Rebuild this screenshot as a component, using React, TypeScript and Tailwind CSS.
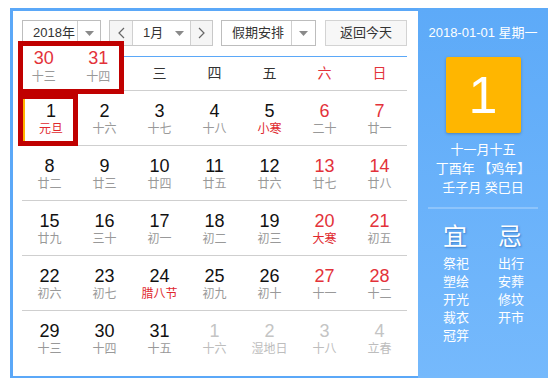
import React from "react";

type Day = { n: number; l: string; red?: boolean; lred?: boolean; other?: boolean; sel?: boolean };

const rows: Day[][] = [
  [
    { n: 1, l: "元旦", lred: true, sel: true },
    { n: 2, l: "十六" },
    { n: 3, l: "十七" },
    { n: 4, l: "十八" },
    { n: 5, l: "小寒", lred: true },
    { n: 6, l: "二十", red: true },
    { n: 7, l: "廿一", red: true },
  ],
  [
    { n: 8, l: "廿二" },
    { n: 9, l: "廿三" },
    { n: 10, l: "廿四" },
    { n: 11, l: "廿五" },
    { n: 12, l: "廿六" },
    { n: 13, l: "廿七", red: true },
    { n: 14, l: "廿八", red: true },
  ],
  [
    { n: 15, l: "廿九" },
    { n: 16, l: "三十" },
    { n: 17, l: "初一" },
    { n: 18, l: "初二" },
    { n: 19, l: "初三" },
    { n: 20, l: "大寒", red: true, lred: true },
    { n: 21, l: "初五", red: true },
  ],
  [
    { n: 22, l: "初六" },
    { n: 23, l: "初七" },
    { n: 24, l: "腊八节", lred: true },
    { n: 25, l: "初九" },
    { n: 26, l: "初十" },
    { n: 27, l: "十一", red: true },
    { n: 28, l: "十二", red: true },
  ],
  [
    { n: 29, l: "十三" },
    { n: 30, l: "十四" },
    { n: 31, l: "十五" },
    { n: 1, l: "十六", other: true },
    { n: 2, l: "湿地日", other: true },
    { n: 3, l: "十八", other: true },
    { n: 4, l: "立春", other: true },
  ],
];

const weekdays = ["一", "二", "三", "四", "五", "六", "日"];

const font = { fontFamily: '"Liberation Sans", Arial, "Noto Sans CJK SC", sans-serif' };

function Tri() {
  return (
    <svg width="9" height="5" viewBox="0 0 9 5">
      <polygon points="0,0 9,0 4.5,5" fill="#8a8a8a" />
    </svg>
  );
}

function Chevron({ dir }: { dir: "l" | "r" }) {
  return (
    <svg width="7" height="12" viewBox="0 0 7 12">
      <polyline
        points={dir === "l" ? "6,1 1,6 6,11" : "1,1 6,6 1,11"}
        fill="none"
        stroke="#666"
        strokeWidth="1.2"
      />
    </svg>
  );
}

export default function App() {
  return (
    <div className="w-[554px] h-[390px] bg-white relative" style={font}>
      <div className="absolute left-0 top-0 w-full h-full">
        <div className="ml-[10px] mt-[8px] flex h-[370px] w-[538px]">
          {/* left calendar */}
          <div className="w-[408px] h-full border-t-[3px] border-l-[3px] border-b-[2px] border-[#5ba8f8] bg-white pl-[9px] pt-[9px]">
            {/* toolbar */}
            <div className="flex h-[26px] text-[13px] text-[#333]">
              <div className="flex w-[79px] h-[26px] border border-[#bdbdbd]">
                <div className="flex-1 flex items-center pl-[10px]">2018年</div>
                <div className="w-[23px] border-l border-[#cfcfcf] flex items-center justify-center">
                  <Tri />
                </div>
              </div>
              <div className="ml-[8px] flex w-[104px] h-[26px] border border-[#c8c8c8]">
                <div className="w-[23px] bg-[#f5f5f5] border-r border-[#d0d0d0] flex items-center justify-center">
                  <Chevron dir="l" />
                </div>
                <div className="flex-1 flex items-center pl-[10px] pr-[6px] justify-between">
                  <span>1月</span>
                  <Tri />
                </div>
                <div className="w-[22px] bg-[#f5f5f5] border-l border-[#d0d0d0] flex items-center justify-center">
                  <Chevron dir="r" />
                </div>
              </div>
              <div className="ml-[8px] flex w-[95px] h-[26px] border border-[#bdbdbd]">
                <div className="flex-1 flex items-center pl-[10px]">假期安排</div>
                <div className="w-[24px] border-l border-[#cfcfcf] flex items-center justify-center">
                  <Tri />
                </div>
              </div>
              <div className="ml-[9px] w-[82px] h-[26px] border border-[#d3d3d3] bg-[#f7f7f7] flex items-center justify-center">
                返回今天
              </div>
            </div>
            {/* grid */}
            <div className="mt-[10px] w-[385px] border-t border-[#5ba8f8]">
              <div className="grid grid-cols-7 h-[34px] border-b border-[#cfcfcf] text-[14px]">
                {weekdays.map((w, i) => (
                  <div
                    key={w}
                    className={`flex items-center justify-center ${i >= 5 ? "text-[#e3323a]" : "text-[#333]"} ${i < 2 ? "invisible" : ""}`}
                  >
                    {w}
                  </div>
                ))}
              </div>
              {rows.map((r, ri) => (
                <div
                  key={ri}
                  className={`grid grid-cols-7 h-[55px] ${ri < 4 ? "border-b border-[#cfcfcf]" : ""}`}
                >
                  {r.map((d, di) => (
                    <div
                      key={di}
                      className={`flex flex-col items-center pt-[10px] ${d.sel ? "border-l-[3px] border-[#ffb400]" : ""}`}
                    >
                      <div
                        className={`text-[18px] leading-[20px] ${
                          d.other ? "text-[#c4c4c4]" : d.red ? "text-[#e3323a]" : "text-[#111]"
                        }`}
                      >
                        {d.n}
                      </div>
                      <div
                        className={`text-[12px] leading-[16px] ${
                          d.other ? "text-[#bdbdbd]" : d.lred ? "text-[#e0282e]" : "text-[#999]"
                        }`}
                      >
                        {d.l}
                      </div>
                    </div>
                  ))}
                </div>
              ))}
            </div>
          </div>
          {/* right panel */}
          <div className="w-[130px] h-full bg-gradient-to-b from-[#5daaf8] to-[#75b9fc] text-white flex flex-col items-center">
            <div className="mt-[17px] text-[13px] leading-[16px]">2018-01-01 星期一</div>
            <div className="mt-[16px] w-[75px] h-[76px] bg-[#ffb600] rounded-[2px] shadow-[0_1px_3px_rgba(0,0,0,0.25)] flex items-center justify-center">
              <span className="text-[52px] leading-none font-normal">1</span>
            </div>
            <div className="mt-[7px] text-[13px] leading-[19px] text-center">
              <div>十一月十五</div>
              <div>丁酉年 【鸡年】</div>
              <div>壬子月 癸巳日</div>
            </div>
            <div className="mt-[10px] w-[110px] h-[2px] bg-[#8dc4fb]" />
            <div className="mt-[14px] flex w-[110px]">
              <div className="w-[55px] pl-[15px]">
                <div className="text-[24px] leading-[28px] [text-shadow:1px_1px_2px_rgba(0,60,140,0.45)]">宜</div>
                <div className="mt-[4px] text-[13px] leading-[18px]">
                  <div>祭祀</div>
                  <div>塑绘</div>
                  <div>开光</div>
                  <div>裁衣</div>
                  <div>冠笄</div>
                </div>
              </div>
              <div className="w-[55px] pl-[15px]">
                <div className="text-[24px] leading-[28px] [text-shadow:1px_1px_2px_rgba(0,60,140,0.45)]">忌</div>
                <div className="mt-[4px] text-[13px] leading-[18px]">
                  <div>出行</div>
                  <div>安葬</div>
                  <div>修坟</div>
                  <div>开市</div>
                </div>
              </div>
            </div>
          </div>
        </div>
      </div>

      {/* annotation overlay 1 */}
      <div className="absolute left-[18px] top-[41px] w-[106px] h-[53px] border-[5px] border-[#c00000] bg-white flex gap-[13px]">
        {[
          { n: 30, l: "十三" },
          { n: 31, l: "十四" },
        ].map((d) => (
          <div key={d.n} className="w-[42px] flex flex-col items-center pt-[2px]">
            <div className="text-[18px] leading-[20px] text-[#e3323a]">{d.n}</div>
            <div className="mt-[1px] text-[12px] leading-[16px] text-[#999]">{d.l}</div>
          </div>
        ))}
      </div>
      {/* annotation overlay 2 */}
      <div className="absolute left-[18px] top-[94px] w-[60px] h-[52px] border-[5px] border-[#c00000]" />
    </div>
  );
}
